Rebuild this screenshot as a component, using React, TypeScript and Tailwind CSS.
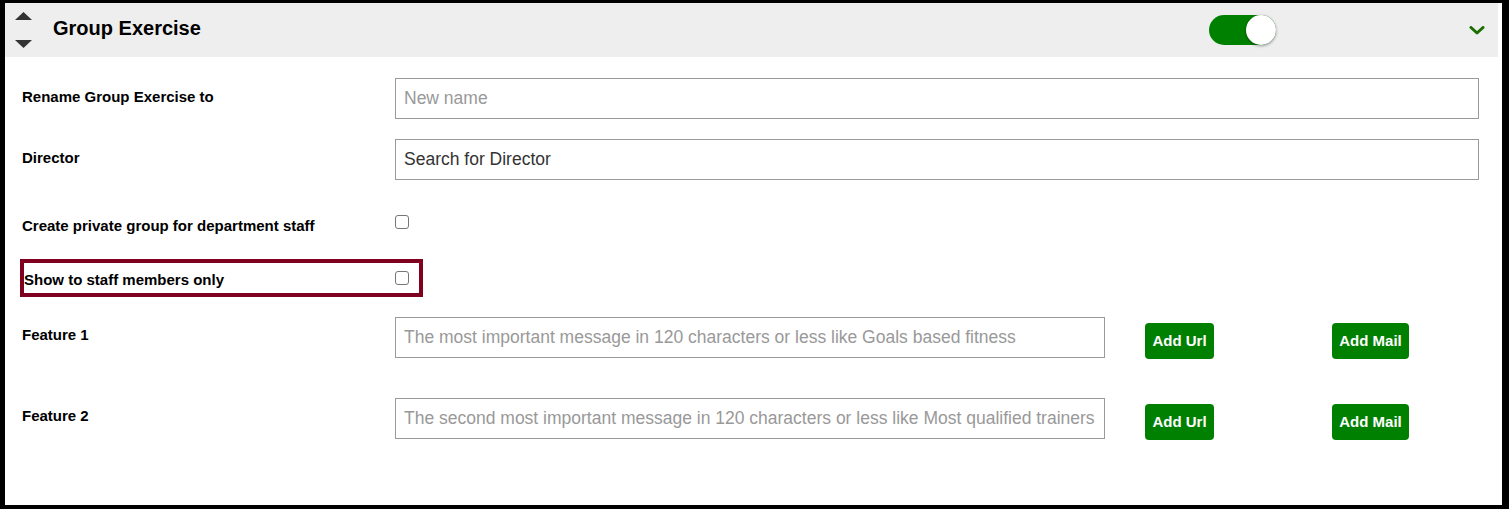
import { useState } from 'react';

// ── Small drawings ───────────────────────────────────────────────────────────

function SortArrows() {
  return (
    <div className="flex h-full w-[17px] flex-col justify-between py-[9px]">
      <svg width="17" height="8" viewBox="0 0 17 8">
        <polygon points="0,8 8.5,0 17,8" fill="#333" />
      </svg>
      <svg width="17" height="8" viewBox="0 0 17 8">
        <polygon points="0,0 17,0 8.5,8" fill="#333" />
      </svg>
    </div>
  );
}

function Toggle({ on, onChange }: { on: boolean; onChange: () => void }) {
  return (
    <button
      type="button"
      onClick={onChange}
      className={`relative h-[30px] w-[67px] rounded-full ${on ? 'bg-[#008000]' : 'bg-[#ccc]'}`}
    >
      <span
        className={`absolute top-0 h-[30px] w-[30px] rounded-full bg-white shadow-[0_1px_3px_rgba(0,0,0,0.4)] ${
          on ? 'right-0' : 'left-0'
        }`}
      />
    </button>
  );
}

function Chevron() {
  return (
    <svg width="16" height="9" viewBox="0 0 16 9">
      <polyline
        points="2,1.5 8,7 14,1.5"
        fill="none"
        stroke="#1b6e00"
        strokeWidth="3"
        strokeLinecap="round"
        strokeLinejoin="round"
      />
    </svg>
  );
}

// ── Form pieces ──────────────────────────────────────────────────────────────

const labelCls = 'text-[15px] leading-[18px] font-bold text-black';
const inputCls =
  'h-[41px] border-[1.5px] border-[#9a9a9a] bg-white px-[8px] text-[17.5px] text-[#333] placeholder:text-[#999] outline-none';

function Checkbox({ className = '' }: { className?: string }) {
  return (
    <input
      type="checkbox"
      className={`m-0 h-[14px] w-[14px] appearance-none rounded-[3px] border border-[#767676] bg-white ${className}`}
    />
  );
}

function GreenButton({ children, width }: { children: string; width: string }) {
  return (
    <button
      type="button"
      className={`h-[36px] ${width} rounded-[4px] bg-[#008000] text-[15px] font-bold text-white`}
    >
      {children}
    </button>
  );
}

function FeatureRow({ label, placeholder }: { label: string; placeholder: string }) {
  return (
    <div className="flex items-start">
      <div className={`${labelCls} w-[373px] pt-[9px]`}>{label}</div>
      <input className={`${inputCls} w-[710px]`} placeholder={placeholder} />
      <div className="ml-[40px] mt-[6px]">
        <GreenButton width="w-[69px]">Add Url</GreenButton>
      </div>
      <div className="ml-[118px] mt-[6px]">
        <GreenButton width="w-[77px]">Add Mail</GreenButton>
      </div>
    </div>
  );
}

// ── App ──────────────────────────────────────────────────────────────────────

export default function App() {
  const [enabled, setEnabled] = useState(true);

  return (
    <div
      className="h-[509px] w-[1509px] border-b-[4px] border-l-[5px] border-r-[7px] border-t-[3px] border-black bg-white"
      style={{ fontFamily: '"Liberation Sans", Arial, sans-serif' }}
    >
      <div className="h-full pr-[4px]">
        {/* Header */}
        <div className="flex h-[54px] items-center bg-[#eeeeee] pl-[10px]">
          <SortArrows />
          <h2 className="mb-[4px] ml-[21px] text-[20px] font-bold text-black">Group Exercise</h2>
          <div className="ml-auto mr-[193px] flex items-center">
            <Toggle on={enabled} onChange={() => setEnabled(!enabled)} />
          </div>
          <div className="mr-[13px] mt-[1px]">
            <Chevron />
          </div>
        </div>

        {/* Body */}
        <div className="pl-[17px] pt-[21px]">
          <div className="flex items-start">
            <div className={`${labelCls} w-[373px] pt-[10px]`}>Rename Group Exercise to</div>
            <input className={`${inputCls} w-[1084px]`} placeholder="New name" />
          </div>

          <div className="mt-[20px] flex items-start">
            <div className={`${labelCls} w-[373px] pt-[10px]`}>Director</div>
            <input className={`${inputCls} w-[1084px]`} defaultValue="Search for Director" />
          </div>

          <div className="mt-[35px] flex h-[14px] items-start">
            <div className={`${labelCls} w-[373px] pt-[2px]`}>Create private group for department staff</div>
            <Checkbox />
          </div>

          <div className="-ml-[2px] mt-[30px] flex h-[38px] w-[403px] items-start border-[4px] border-[#800020]">
            <div className={`${labelCls} w-[371px] whitespace-nowrap pt-[8px]`}>Show to staff members only</div>
            <Checkbox className="mt-[8px]" />
          </div>

          <div className="mt-[20px]">
            <FeatureRow
              label="Feature 1"
              placeholder="The most important message in 120 characters or less like Goals based fitness"
            />
          </div>
          <div className="mt-[39px]">
            <FeatureRow
              label="Feature 2"
              placeholder="The second most important message in 120 characters or less like Most qualified trainers"
            />
          </div>
        </div>
      </div>
    </div>
  );
}
